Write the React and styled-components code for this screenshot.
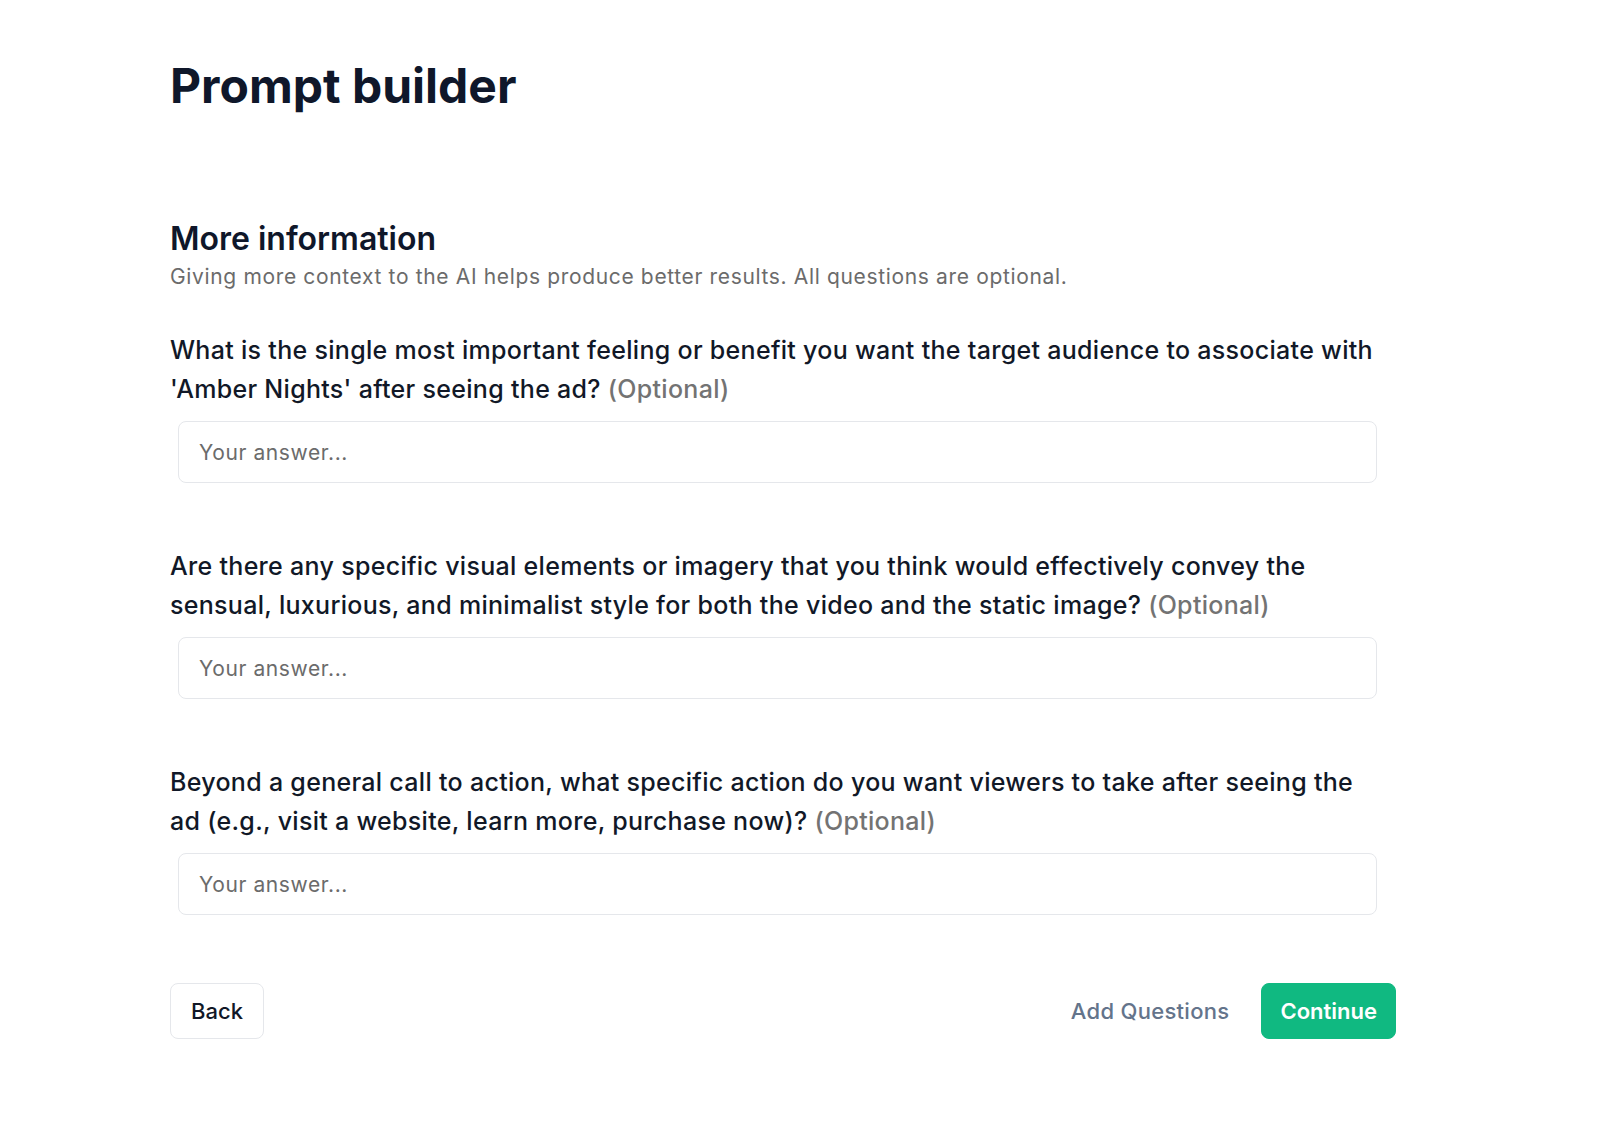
import React from 'react';
import styled, { createGlobalStyle } from 'styled-components';

const GlobalStyle = createGlobalStyle`
	body {
		margin: 0;
		background: #ffffff;
		font-family: Inter, "Noto Sans", "Liberation Sans", sans-serif;
		color: #111827;
	}
`;

const Page = styled.div`
	padding: 57px 0 80px 170px;
	width: 1226px;
`;

const Title = styled.h1`
	margin: 0;
	font-size: 48px;
	line-height: 58px;
	font-weight: 700;
	color: #0f172a;
`;

const Section = styled.section`
	margin-top: 104px;
`;

const SectionTitle = styled.h2`
	margin: 0;
	font-size: 32px;
	line-height: 40px;
	font-weight: 600;
	color: #0f172a;
`;

const SectionNote = styled.p`
	margin: 4px 0 0;
	font-size: 21px;
	line-height: 28px;
	letter-spacing: 0.65px;
	color: #6b6b6b;
`;

const QuestionList = styled.div`
	margin-top: 40px;
	display: flex;
	flex-direction: column;
	gap: 64px;
`;

const Question = styled.div`
	display: flex;
	flex-direction: column;
	gap: 12px;
`;

const Label = styled.label`
	max-width: 1212px;
	font-size: 25px;
	line-height: 39px;
	font-weight: 500;
	letter-spacing: 0.3px;
	color: #111827;
`;

const Optional = styled.span`
	color: #737373;
`;

const Input = styled.input`
	box-sizing: border-box;
	margin-left: 8px;
	width: 1199px;
	height: 62px;
	padding: 0 20px;
	border: 1px solid #e5e7eb;
	border-radius: 8px;
	background: #fff;
	font-family: inherit;
	font-size: 21px;
	letter-spacing: 0.6px;
	color: #111827;
	outline: none;

	&::placeholder {
		color: #6b6b6b;
	}
`;

const Footer = styled.div`
	margin-top: 68px;
	display: flex;
	align-items: center;
	justify-content: space-between;
`;

const Actions = styled.div`
	display: flex;
	align-items: center;
	gap: 32px;
`;

const Button = styled.button`
	box-sizing: border-box;
	height: 56px;
	padding: 0 ${props => props.$pad || 20}px;
	border-radius: 8px;
	font-family: inherit;
	font-size: 22px;
	font-weight: ${props => props.$primary ? 600 : 500};
	cursor: pointer;
	border: 1px solid ${props => props.$primary ? '#10b981' : '#e5e7eb'};
	background: ${props => props.$primary ? '#10b981' : '#fff'};
	color: ${props => props.$primary ? '#fff' : '#111827'};
`;

const LinkButton = styled.button`
	border: none;
	background: none;
	padding: 0;
	font-family: inherit;
	font-size: 22px;
	font-weight: 500;
	letter-spacing: 0.3px;
	color: #64748b;
	cursor: pointer;
`;

const questions = [
	"What is the single most important feeling or benefit you want the target audience to associate with 'Amber Nights' after seeing the ad?",
	'Are there any specific visual elements or imagery that you think would effectively convey the sensual, luxurious, and minimalist style for both the video and the static image?',
	'Beyond a general call to action, what specific action do you want viewers to take after seeing the ad (e.g., visit a website, learn more, purchase now)?'
];

const App = () => {
	return (
		<>
			<GlobalStyle />
			<Page>
				<Title>Prompt builder</Title>
				<Section>
					<SectionTitle>More information</SectionTitle>
					<SectionNote>Giving more context to the AI helps produce better results. All questions are optional.</SectionNote>
					<QuestionList>
						{questions.map((q, i) => (
							<Question key={i}>
								<Label htmlFor={`q${i}`}>
									{q} <Optional>(Optional)</Optional>
								</Label>
								<Input id={`q${i}`} placeholder="Your answer..." />
							</Question>
						))}
					</QuestionList>
					<Footer>
						<Button $pad={20}>Back</Button>
						<Actions>
							<LinkButton>Add Questions</LinkButton>
							<Button $primary $pad={18}>Continue</Button>
						</Actions>
					</Footer>
				</Section>
			</Page>
		</>
	);
};

export default App;
